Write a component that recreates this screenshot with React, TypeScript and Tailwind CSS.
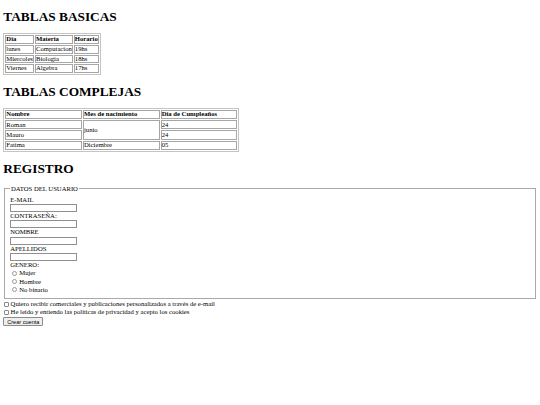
const basicas = [
  ['lunes', 'Computacion', '19hs'],
  ['Miercoles', 'Biologia', '18hs'],
  ['Viernes', 'Algebra', '17hs'],
];

const generos = ['Mujer', 'Hombre', 'No binario'];
const campos = ['E-MAIL', 'CONTRASEÑA:', 'NOMBRE', 'APELLIDOS'];

const cell = 'border border-[#a6a6a6] px-0 py-0 leading-[6.75px] text-left align-middle';

export default function App() {
  return (
    <div className="bg-white min-h-[405px] px-[3.33px] text-black text-[6.67px] leading-[7.67px] font-['Liberation_Serif','Times_New_Roman',serif]">
      <h1 className="text-[13.33px] leading-[15.33px] font-bold my-[8.9px]">TABLAS BASICAS</h1>
      <table className="border-separate border-spacing-[1px] border border-[#c4c4c4]">
        <thead>
          <tr>
            <th className={`${cell} font-bold`}>Dia</th>
            <th className={`${cell} font-bold`}>Materia</th>
            <th className={`${cell} font-bold`}>Horario</th>
          </tr>
        </thead>
        <tbody>
          {basicas.map(row => (
            <tr key={row[0]}>
              {row.map(v => (
                <td key={v} className={cell}>{v}</td>
              ))}
            </tr>
          ))}
        </tbody>
      </table>

      <h1 className="text-[13.33px] leading-[15.33px] font-bold my-[8.9px]">TABLAS COMPLEJAS</h1>
      <table className="table-fixed w-[236px] border-separate border-spacing-[1px] border border-[#c4c4c4]">
        <colgroup>
          <col className="w-1/3" />
          <col className="w-1/3" />
          <col className="w-1/3" />
        </colgroup>
        <thead>
          <tr>
            <th className={`${cell} font-bold py-[0.2px]`}>Nombre</th>
            <th className={`${cell} font-bold py-[0.2px]`}>Mes de nacimiento</th>
            <th className={`${cell} font-bold py-[0.2px]`}>Dia de Cumpleaños</th>
          </tr>
        </thead>
        <tbody>
          <tr>
            <td className={`${cell} py-[0.2px]`}>Roman</td>
            <td rowSpan={2} className={cell}>junio</td>
            <td className={`${cell} py-[0.2px]`}>24</td>
          </tr>
          <tr>
            <td className={`${cell} py-[0.2px]`}>Mauro</td>
            <td className={`${cell} py-[0.2px]`}>24</td>
          </tr>
          <tr>
            <td className={`${cell} py-[0.2px]`}>Fatima</td>
            <td className={`${cell} py-[0.2px]`}>Diciembre</td>
            <td className={`${cell} py-[0.2px]`}>05</td>
          </tr>
        </tbody>
      </table>

      <h1 className="text-[13.33px] leading-[15.33px] font-bold my-[8.9px]">REGISTRO</h1>
      <form>
        <fieldset className="mx-[0.83px] border border-[#a9a9a9] px-[5px] pt-[3px] pb-[4.2px]">
          <legend className="px-[0.83px]">DATOS DEL USUARIO</legend>
          {campos.map(c => (
            <div key={c}>
              <div>{c}</div>
              <input
                type={c === 'CONTRASEÑA:' ? 'password' : 'text'}
                className="block w-[67px] h-[8.2px] mt-[0.6px] border border-[#8f8f8f] bg-white outline-none"
              />
            </div>
          ))}
          <div>GENERO:</div>
          {generos.map(g => (
            <label key={g} className="flex items-center h-[8.33px]">
              <input
                type="radio"
                name="genero"
                className="appearance-none w-[5.3px] h-[5.3px] ml-[2px] mr-[1.8px] rounded-full border border-[#9a9a9a] bg-white"
              />
              <span>{g}</span>
            </label>
          ))}
        </fieldset>
        <label className="flex items-center h-[7.67px] mt-[0.8px]">
          <input
            type="checkbox"
            className="appearance-none w-[5.3px] h-[5.3px] mt-[2px] ml-[0.6px] mr-[1.4px] rounded-[1px] border border-[#8a8a8a] bg-white"
          />
          <span>Quiero recibir comerciales y publicaciones personalizados a través de e-mail</span>
        </label>
        <label className="flex items-center h-[7.67px]">
          <input
            type="checkbox"
            className="appearance-none w-[5.3px] h-[5.3px] mt-[2px] ml-[0.6px] mr-[1.4px] rounded-[1px] border border-[#8a8a8a] bg-white"
          />
          <span>He leído y entiendo las políticas de privacidad y acepto los cookies</span>
        </label>
        <button
          type="button"
          className="block mt-[2.2px] h-[9px] px-[2.8px] border border-[#8a8a8a] rounded-[1px] bg-[#efefef] text-[5.6px] leading-[6px] font-['Liberation_Sans',Arial,sans-serif]"
        >
          Crear cuenta
        </button>
      </form>
    </div>
  );
}
